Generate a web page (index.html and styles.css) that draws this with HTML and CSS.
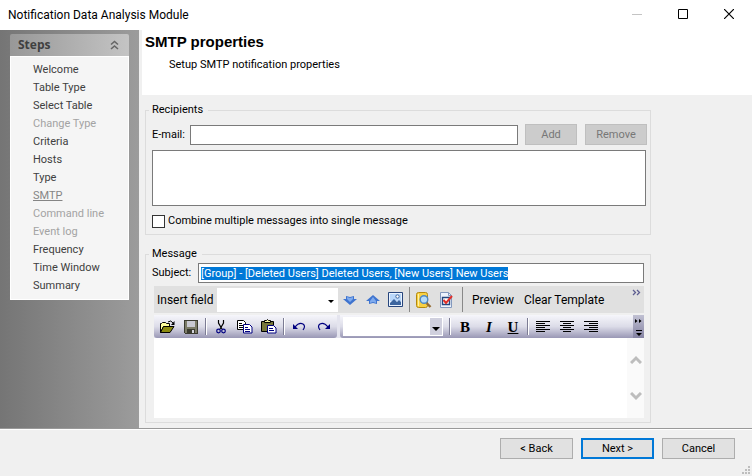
FILE: index.html
```html
<!DOCTYPE html>
<html lang="en">
<head>
    <meta charset="UTF-8">
    <meta name="viewport" content="width=device-width, initial-scale=1.0">
    <title>Notification Data Analysis Module</title>
    <link rel="stylesheet" href="styles.css">
</head>
<body>
    <header class="titlebar">
        <span class="titlebar-text">Notification Data Analysis Module</span>
        <div class="window-buttons">
            <button type="button" aria-label="Minimize" disabled>
                <svg width="10" height="10"><path d="M0 5.5h10" stroke="#c4c4c4"/></svg>
            </button>
            <button type="button" aria-label="Maximize">
                <svg width="10" height="10"><path d="M.5.5h9v9h-9z" fill="none" stroke="#000"/></svg>
            </button>
            <button type="button" aria-label="Close">
                <svg width="10" height="10"><path d="M0 0l10 10M10 0L0 10" stroke="#000" stroke-width="1.2"/></svg>
            </button>
        </div>
    </header>

    <div class="wizard">
        <aside class="sidebar">
            <nav class="steps">
                <div class="steps-header">
                    <h2>Steps</h2>
                    <button type="button" aria-label="Collapse">
                        <svg width="9" height="10" fill="none" stroke="#666" stroke-width="1.600"><path d="M1 4.500l3.500-3 3.500 3M1 9l3.500-3L8 9"/></svg>
                    </button>
                </div>
                <ul>
                    <li><a href="#">Welcome</a></li>
                    <li><a href="#">Table Type</a></li>
                    <li><a href="#">Select Table</a></li>
                    <li><a class="disabled" href="#">Change Type</a></li>
                    <li><a href="#">Criteria</a></li>
                    <li><a href="#">Hosts</a></li>
                    <li><a href="#">Type</a></li>
                    <li><a class="current" href="#">SMTP</a></li>
                    <li><a class="disabled" href="#">Command line</a></li>
                    <li><a class="disabled" href="#">Event log</a></li>
                    <li><a href="#">Frequency</a></li>
                    <li><a href="#">Time Window</a></li>
                    <li><a href="#">Summary</a></li>
                </ul>
            </nav>
        </aside>

        <main class="page">
            <div class="page-header">
                <h1>SMTP properties</h1>
                <p>Setup SMTP notification properties</p>
            </div>

            <form class="page-body">
                <fieldset class="recipients">
                    <legend>Recipients</legend>
                    <div class="row email-row">
                        <label for="email">E-mail:</label>
                        <input type="text" id="email">
                        <button type="button" class="btn add" disabled>Add</button>
                        <button type="button" class="btn remove" disabled>Remove</button>
                    </div>
                    <textarea class="recipient-list" aria-label="Recipient list"></textarea>
                    <label class="check"><input type="checkbox">Combine multiple messages into single message</label>
                </fieldset>

                <fieldset class="message">
                    <legend>Message</legend>
                    <div class="row subject-row">
                        <label for="subject">Subject:</label>
                        <input type="text" id="subject" value="[Group] - [Deleted Users] Deleted Users, [New Users] New Users">
                    </div>

                    <div class="editor">
                        <div class="template-bar">
                            <label for="field">Insert field</label>
                            <div class="combo field-combo"><select id="field"><option></option></select></div>
                            <button type="button" class="tool" aria-label="Move down">
                                <svg width="14" height="12"><path d="M3 2l4 1 4-1v3h3L7 11 0 5h3z" fill="#3f74cf"/><path d="M4 3l3 1 3-1v2L7 8 4 5z" fill="#7fabee"/></svg>
                            </button>
                            <button type="button" class="tool" aria-label="Move up">
                                <svg width="14" height="12"><path d="M3 10l4-1 4 1V7h3L7 1 0 7h3z" fill="#3f74cf"/><path d="M4 9l3-1 3 1V7L7 3 4 7z" fill="#7fabee"/></svg>
                            </button>
                            <button type="button" class="tool" aria-label="Insert picture">
                                <svg width="15" height="15"><path d="M.5.5h14v14H.5z" fill="#e8f2ff" stroke="#27457c"/><path d="M2 2h11v7H2z" fill="#b9d7fa"/><path d="M2 11l4-4 3 3 2-2 2 2v3H2z" fill="#3c659f"/><circle cx="9.500" cy="4.500" r="1.700" fill="#fff" stroke="#3c659f"/></svg>
                            </button>
                            <span class="divider"></span>
                            <button type="button" class="tool" aria-label="Find field">
                                <svg width="17" height="16"><path d="M1.500 2.500q0-2 2-2h7q2 0 2 2v11q0 2-2 2h-7q-2 0-2-2z" fill="#f8d044" stroke="#b28910"/><path d="M3.500 2v12" stroke="#fff2a4"/><path d="M11.500 11l4 4" stroke="#956a32" stroke-width="2.400"/><circle cx="9" cy="7.500" r="3.800" fill="#b5dcfa" stroke="#4f87c3" stroke-width="1.400"/></svg>
                            </button>
                            <button type="button" class="tool" aria-label="Check template">
                                <svg width="15" height="16"><path d="M1.500.5h8l3 3v12h-11z" fill="#edf3fd" stroke="#8298bd"/><path d="M9.500.5v3h3" fill="none" stroke="#8298bd"/><path d="M3.500 5.500h7v7h-7z" fill="#fff" stroke="#26477e" stroke-width="1.400"/><path d="M4.500 8L7 11l6-7" fill="none" stroke="#e02f28" stroke-width="2"/></svg>
                            </button>
                            <span class="divider"></span>
                            <button type="button" class="text-tool">Preview</button>
                            <button type="button" class="text-tool">Clear Template</button>
                            <button type="button" class="more" aria-label="More commands">
                                <svg width="9" height="7" fill="none" stroke="#5d5d91" stroke-width="1.300"><path d="M1 1l2.500 2.500L1 6M5 1l2.500 2.500L5 6"/></svg>
                            </button>
                        </div>

                        <div class="format-bar">
                            <div class="band">
                                <button type="button" class="tool" aria-label="Open">
                                    <svg width="16" height="14"><path d="M1.500 12.500v-9h1l1-1h3l1 1h3v3h-6z" fill="#ffff9c" stroke="#000"/><path d="M1.500 12.500l3-6h10.500l-4 6z" fill="#8b8b10" stroke="#000"/><path d="M9 2q3-2.500 5 1" fill="none" stroke="#000"/><path d="M15.500 1v4H12z"/></svg>
                                </button>
                                <button type="button" class="tool" aria-label="Save">
                                    <svg width="14" height="14" shape-rendering="crispEdges"><path d="M0 0h14v14H1l-1-1z" fill="#3b3b30"/><path d="M1 1h12v12H1z" fill="#7c7c68"/><path d="M3 1h8v6H3z" fill="#c9c9d2"/><path d="M3 9h8v4H3z" fill="#3b3b30"/><path d="M8 10h2v3H8z" fill="#d4d4dd"/></svg>
                                </button>
                                <span class="divider"></span>
                                <button type="button" class="tool" aria-label="Cut">
                                    <svg width="10" height="14" fill="none"><path d="M2.500 0v3l3.500 6M7.500 0v3L4 9" stroke="#000" stroke-width="1.200"/><circle cx="2.500" cy="11" r="1.800" stroke="#000080" stroke-width="1.200"/><circle cx="7.500" cy="11" r="1.800" stroke="#000080" stroke-width="1.200"/></svg>
                                </button>
                                <button type="button" class="tool" aria-label="Copy">
                                    <svg width="16" height="14" fill="#fff"><path d="M.5.5h6l2 2v7h-8z" stroke="#000"/><path d="M2 3.500h3M2 5.500h4M2 7.500h4" stroke="#000"/><path d="M6.500 4.500h6l2.500 2.500v6H6.500z" stroke="#000080"/><path d="M8 7.500h3M8 9.500h5M8 11.500h5" stroke="#000080"/></svg>
                                </button>
                                <button type="button" class="tool" aria-label="Paste">
                                    <svg width="16" height="15"><path d="M.5 2.500h12v10H.5z" fill="#77773a" stroke="#000"/><path d="M3.500 3.500v-2h2l1-1 1 1h2v2z" fill="#f5f5a0" stroke="#000"/><path d="M6.500 6.500h6l2.500 2.500v5H6.500z" fill="#fff" stroke="#000080"/><path d="M8 9.500h4M8 11.500h5" stroke="#000080"/></svg>
                                </button>
                                <span class="divider"></span>
                                <button type="button" class="tool" aria-label="Undo">
                                    <svg width="13" height="9"><path d="M2 5q4-5 8-3 3 2 0 6" fill="none" stroke="#000080" stroke-width="1.200"/><path d="M0 2v5h5z" fill="#000080"/></svg>
                                </button>
                                <button type="button" class="tool" aria-label="Redo">
                                    <svg width="13" height="9"><path d="M11 5Q7 0 3 2 0 4 3 8" fill="none" stroke="#000080" stroke-width="1.200"/><path d="M13 2v5H8z" fill="#000080"/></svg>
                                </button>
                            </div>
                            <div class="band band-wide">
                                <div class="combo style-combo"><select aria-label="Font size"><option></option></select></div>
                                <span class="divider"></span>
                                <button type="button" class="tool letter"><b>B</b></button>
                                <button type="button" class="tool letter"><i>I</i></button>
                                <button type="button" class="tool letter"><u>U</u></button>
                                <span class="divider"></span>
                                <button type="button" class="tool" aria-label="Align left">
                                    <svg width="14" height="11" stroke="#000"><path d="M0 .5h14M0 2.500h9M0 4.500h14M0 6.500h9M0 8.500h14M0 10.500h9"/></svg>
                                </button>
                                <button type="button" class="tool" aria-label="Align center">
                                    <svg width="14" height="11" stroke="#000"><path d="M0 .5h14M3 2.500h8M0 4.500h14M3 6.500h8M0 8.500h14M3 10.500h8"/></svg>
                                </button>
                                <button type="button" class="tool" aria-label="Align right">
                                    <svg width="14" height="11" stroke="#000"><path d="M0 .5h14M5 2.500h9M0 4.500h14M5 6.500h9M0 8.500h14M5 10.500h9"/></svg>
                                </button>
                                <button type="button" class="overflow" aria-label="Toolbar options">
                                    <svg width="9" height="20"><path d="M1 2l2.500 2L1 6zM5 2l2.500 2L5 6zM2 13h6v1H2zM2 16h6l-3 3z"/></svg>
                                </button>
                            </div>
                        </div>

                        <div class="edit-area">
                            <textarea aria-label="Message body"></textarea>
                            <div class="scrollbar">
                                <button type="button" aria-label="Scroll up">
                                    <svg width="12" height="9" fill="none" stroke="#bdbdbd" stroke-width="3"><path d="M1 8l5-5 5 5"/></svg>
                                </button>
                                <button type="button" aria-label="Scroll down">
                                    <svg width="12" height="9" fill="none" stroke="#bdbdbd" stroke-width="3"><path d="M1 1l5 5 5-5"/></svg>
                                </button>
                            </div>
                        </div>
                    </div>
                </fieldset>
            </form>
        </main>
    </div>

    <footer class="actions">
        <button type="button" class="btn">&lt; Back</button>
        <button type="button" class="btn primary">Next &gt;</button>
        <button type="button" class="btn">Cancel</button>
        <svg class="grip" width="8" height="8" fill="#bdbdbd"><path d="M6 0h2v2H6zM3 3h2v2H3zM6 3h2v2H6zM0 6h2v2H0zM3 6h2v2H3zM6 6h2v2H6z"/></svg>
    </footer>

    <script>
        // The subject is preselected so it can be typed over
        const subject = document.getElementById('subject');
        subject.focus();
        subject.select();
    </script>
</body>
</html>
```
FILE: styles.css
```css
:root {
    --face: #f0f0f0;
    --line: #dcdcdc;
    --edge: #7a7a7a;
    --accent: #0078d7;
    --ui-font: Roboto, "Noto Sans", sans-serif;
    --title-font: "Open Sans", "Noto Sans", sans-serif;
}

* {
    margin: 0;
    padding: 0;
    box-sizing: border-box;
}

body {
    min-height: 100vh;
    display: flex;
    flex-direction: column;
    background: var(--face);
    color: #000;
    font: 11px/14px var(--ui-font);
}

button,
input,
select,
textarea {
    font: inherit;
    color: inherit;
    border: none;
    border-radius: 0;
    outline: none;
}

button {
    background: none;
}

svg {
    display: block;
}

/* Title bar */
.titlebar {
    display: flex;
    justify-content: space-between;
    height: 30px;
    background: #fff;
}

.titlebar-text {
    padding-left: 8px;
    font: 12px/30px var(--ui-font);
}

.window-buttons {
    display: flex;
}

.window-buttons button {
    width: 46px;
    padding: 0 18px 2px;
}

/* Steps */
.wizard {
    flex: 1;
    display: flex;
    border-bottom: 1px solid #999;
}

.sidebar {
    flex: none;
    width: 139px;
    padding: 4px 10px;
    background: linear-gradient(to right, #757575, #9c9c9c);
}

.steps-header {
    display: flex;
    align-items: center;
    justify-content: space-between;
    height: 22px;
    padding: 0 10px 0 8px;
    border-radius: 2px 2px 0 0;
    background: linear-gradient(to right, #989898, #c4c4c4);
}

.steps-header h2 {
    font: bold 12px/14px var(--title-font);
    color: #404040;
}

.steps ul {
    padding: 4px 0 4px 22px;
    list-style: none;
    background: #f5f5f5;
    border: 1px solid #fff;
}

.steps li {
    line-height: 18px;
}

.steps a {
    color: #404040;
    text-decoration: none;
}

.steps .disabled {
    color: #a3a3a3;
}

.steps .current {
    color: #858585;
    text-decoration: underline;
}

/* Page */
.page {
    flex: 1;
    min-width: 0;
    padding-left: 3px;
}

.page-header {
    height: 65px;
    padding: 3px;
    background: #fff;
}

.page-header h1 {
    font: bold 15px/17px "Liberation Sans", sans-serif;
}

.page-header p {
    padding: 8px 0 0 24px;
}

.page-body {
    padding: 8px 101px 4px 3px;
}

fieldset {
    min-width: 0;
    padding: 0 6px;
    border: 1px solid var(--line);
}

legend {
    padding: 0 5px 0 3px;
    margin-left: -3px;
}

.row {
    display: flex;
    align-items: center;
}

.row input {
    flex: 1;
    min-width: 0;
    height: 20px;
    padding: 0 2px;
    border: 1px solid var(--edge);
    background: #fff;
}

.email-row {
    padding-top: 7px;
}

.email-row label {
    width: 38px;
}

.btn {
    width: 73px;
    height: 21px;
    background: #e1e1e1;
    border: 1px solid #adadad;
}

.btn.primary {
    border: 2px solid var(--accent);
}

.btn:disabled {
    background: #ccc;
    border-color: #bfbfbf;
    color: #777;
}

.recipients {
    padding-right: 4px;
}

.add {
    width: 52px;
    margin: 0 8px 0 7px;
}

.remove {
    width: 62px;
    margin-right: -1px;
}

.recipient-list {
    display: block;
    width: 100%;
    height: 56px;
    margin-top: 5px;
    border: 1px solid var(--edge);
    background: #fff;
    resize: none;
}

.check {
    display: flex;
    align-items: center;
    gap: 3px;
    padding: 8px 0 6px;
}

.check input {
    appearance: none;
    width: 13px;
    height: 13px;
    border: 1px solid #333;
    background: #fff;
}

/* Message */
.message {
    margin-top: 12px;
    padding-bottom: 4px;
}

.subject-row {
    padding-top: 2px;
}

.subject-row label {
    width: 46px;
}

#subject::selection {
    background: var(--accent);
    color: #fff;
}

.editor {
    margin: 3px 0 0 2px;
}

.template-bar {
    display: flex;
    align-items: center;
    height: 27px;
    padding-left: 3px;
    background: #e0e0e0;
    font: 12px/16px var(--ui-font);
}

.template-bar label {
    width: 60px;
    white-space: nowrap;
}

.combo {
    position: relative;
    display: flex;
    background: #fff;
}

.combo select {
    width: 100%;
    appearance: none;
    background: none;
}

.combo::after {
    content: "";
    position: absolute;
    right: 4px;
    top: 50%;
    border: 3px solid transparent;
    border-top-color: #000;
    border-bottom: none;
    pointer-events: none;
}

.field-combo {
    width: 121px;
    height: 24px;
}

.tool {
    display: flex;
    align-items: center;
    justify-content: center;
    width: 24px;
    height: 23px;
}

.template-bar .tool {
    width: 23px;
}

.template-bar .divider {
    width: 1px;
    height: 25px;
    margin: 0 2px;
    background: #888;
}

.template-bar .divider:nth-of-type(2) {
    margin-left: 4px;
}

.text-tool {
    margin: 0 3px 0 7px;
    white-space: nowrap;
}

.more {
    align-self: flex-start;
    margin-left: auto;
    padding: 3px;
}

.format-bar {
    display: flex;
    gap: 3px;
    margin-top: 2px;
    background: #e4e4ee;
}

.band {
    display: flex;
    align-items: center;
    height: 23px;
    padding: 0 2px 0 1px;
    border-radius: 0 0 3px 3px;
    background: linear-gradient(#f6f6fb, #dcdce8 50%, #9997b5);
}

.band-wide {
    flex: 1;
    padding: 0 0 0 3px;
}

.band .divider {
    width: 2px;
    height: 17px;
    margin: 0 2px;
    border-left: 1px solid #7c7c94;
    background: #fff;
}

.style-combo {
    width: 100px;
    height: 19px;
    margin-right: 4px;
    border: 1px solid #fff;
}

.style-combo select {
    background: linear-gradient(to right, transparent 86px, #d0d0de 86px);
}

.style-combo::after {
    border-width: 4px;
    border-bottom: none;
    right: 2px;
}

.letter {
    font: bold 15px/16px "Liberation Serif", serif;
}

.overflow {
    display: flex;
    justify-content: center;
    align-items: center;
    align-self: stretch;
    width: 11px;
    margin-left: auto;
    background: linear-gradient(#c0c0d2, #8583a3);
}

.edit-area {
    display: flex;
    height: 80px;
    background: #fff;
}

.edit-area textarea {
    flex: 1;
    min-width: 0;
    background: #fff;
    resize: none;
}

.scrollbar {
    display: flex;
    flex-direction: column;
    justify-content: space-between;
    width: 17px;
    padding: 17px 3px;
    background: #fafafa;
}

/* Footer */
.actions {
    position: relative;
    display: flex;
    justify-content: flex-end;
    gap: 8px;
    padding: 8px 17px 17px;
    border-top: 1px solid #fff;
}

.grip {
    position: absolute;
    right: 2px;
    bottom: 2px;
}
```
